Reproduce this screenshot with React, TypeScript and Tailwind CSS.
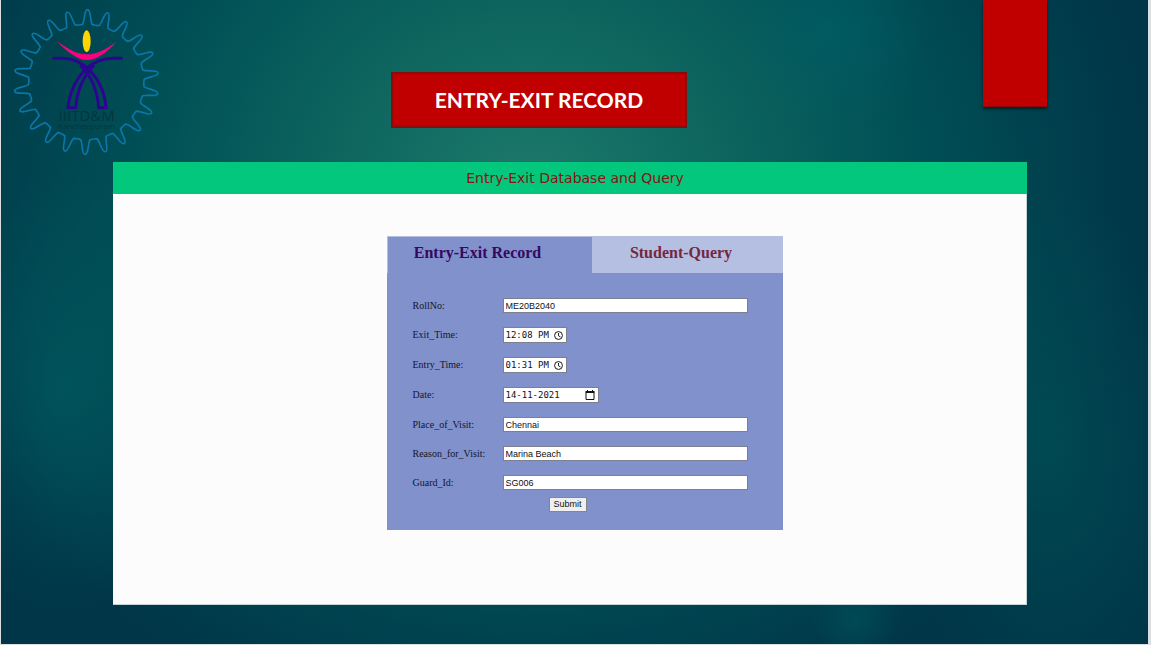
import React from "react";

const TEETH = Array.from({ length: 22 }, (_, i) => (i * 360) / 22);

function Logo() {
  return (
    <svg viewBox="38 24 444 444" className="mt-2 ml-3 size-[148px] shrink-0" role="img" aria-label="IIITD&M Kancheepuram">
      <g transform="translate(258 246)" fill="none" stroke="#0a77a8" strokeWidth="5" strokeLinejoin="round">
        {TEETH.map((angle) => (
          <path
            key={angle}
            transform={`rotate(${angle + 1})`}
            d="M-24.5-170.500L-14-173C-7-187-11-217 0-217S7-187 14-173L24.500-170.500"
          />
        ))}
      </g>
      <ellipse cx="259" cy="124" rx="12" ry="33" fill="#ffd400" />
      <path d="M169 123C202 146 228 163 259 163S316 148 349 125C319 158 288 180 260 180S204 158 169 123Z" fill="#fb0080" />
      <g fill="none" stroke="#2b0590" strokeWidth="9">
        <path d="M156 175H186C222 176 240 187 260 204C294 233 314 279 317 323H295C292 274 278 234 240 195" />
        <path d="M367 175H337C300 176 280 187 260 204C228 233 207 279 203 323H226C230 274 244 234 281 195" />
      </g>
      <text x="259" y="363" textAnchor="middle" fontSize="45" fontFamily="'Open Sans', sans-serif" fill="#04353d">IIITD&amp;M</text>
      <text x="259" y="386" textAnchor="middle" fontSize="24" fontFamily="'Open Sans', sans-serif" fill="#04353d">Kancheepuram</text>
    </svg>
  );
}

function ClockIcon() {
  return (
    <svg viewBox="0 0 16 16" className="size-[9px]" fill="none" stroke="#111" strokeWidth="1.700">
      <circle cx="8" cy="8" r="7" />
      <path d="M8 3.500V8.500L11.500 10.500" />
    </svg>
  );
}

function CalendarIcon() {
  return (
    <svg viewBox="0 0 10 10" className="size-[10px]" fill="none" stroke="#111">
      <path d="M1 2.500H9V9.500H1Z" />
      <path d="M.5 2H9.500" strokeWidth="2" />
      <path d="M2.500 0V2M7.500 0V2" />
    </svg>
  );
}

type Kind = "text" | "time" | "date";

const fields: { id: string; label: string; value: string; kind: Kind }[] = [
  { id: "roll", label: "RollNo:", value: "ME20B2040", kind: "text" },
  { id: "exit", label: "Exit_Time:", value: "12:08 PM", kind: "time" },
  { id: "entry", label: "Entry_Time:", value: "01:31 PM", kind: "time" },
  { id: "date", label: "Date:", value: "14-11-2021", kind: "date" },
  { id: "place", label: "Place_of_Visit:", value: "Chennai", kind: "text" },
  { id: "reason", label: "Reason_for_Visit:", value: "Marina Beach", kind: "text" },
  { id: "guard", label: "Guard_Id:", value: "SG006", kind: "text" },
];

const boxWidth: Record<Kind, string> = {
  text: "h-[15px] w-[245px]",
  time: "h-4 w-16",
  date: "h-4 w-24",
};

function Field({ id, label, value, kind }: (typeof fields)[number]) {
  const picker = kind !== "text";
  return (
    <div className="flex items-center">
      <label htmlFor={id} className="w-[90px] font-['Liberation_Serif',serif] text-[10px] leading-[14px] text-[#15152b]">
        {label}
      </label>
      <div className={`flex items-center border border-[#7c7f90] bg-white px-0.5 ${boxWidth[kind]}`}>
        <input
          id={id}
          type="text"
          defaultValue={value}
          className={`w-full min-w-0 bg-transparent text-[9px] leading-3 text-[#111] outline-none ${
            picker ? "font-['DejaVu_Sans_Mono',monospace]" : "font-['Liberation_Sans',sans-serif]"
          }`}
        />
        {picker && (
          <button type="button" aria-label={`Choose ${kind}`} className="mr-px shrink-0">
            {kind === "time" ? <ClockIcon /> : <CalendarIcon />}
          </button>
        )}
      </div>
    </div>
  );
}

export default function App() {
  return (
    <div className="flex min-h-screen flex-col bg-[#dcdfe1] pr-[3px] pb-px pl-px">
      <div className="flex grow flex-col bg-[#003648] bg-[radial-gradient(circle_at_830px_30px,#00606899,#00606844_50px,transparent_100px),radial-gradient(circle_at_855px_620px,#00606866,transparent_45px),radial-gradient(ellipse_130px_220px_at_60px_390px,#00636588,transparent),radial-gradient(ellipse_150px_260px_at_1050px_450px,#00585a88,transparent),radial-gradient(ellipse_620px_560px_at_46%_190px,#1e7a6b,#0e665f_30%,#005056_62%,#003648)]">
        <header className="flex h-[162px] items-start">
          <Logo />
          <h1 className="mt-[72px] ml-[230px] flex h-14 w-[296px] items-center justify-center border-2 border-[#8b0a0a] bg-[#c00000] font-['Lato',sans-serif] text-[21px] font-bold whitespace-nowrap text-white">
            ENTRY-EXIT RECORD
          </h1>
          <div className="mr-[101px] ml-auto h-[107px] w-16 border-b border-[#8b0a0a] bg-[#c00000] shadow-[0_2px_3px_#0008]" />
        </header>

        <main className="mr-[121px] mb-[39px] ml-28 flex grow flex-col border-r border-b border-[#c5d5d6] bg-[#fcfcfc]">
          <h2 className="-mr-px flex h-8 items-center justify-center bg-[#02c77c] pl-[10px] font-['DejaVu_Sans',sans-serif] text-sm text-[#8b1010]">
            Entry-Exit Database and Query
          </h2>
          <div className="flex justify-center pt-[42px] pl-[30px]">
            <section className="w-[396px] bg-[#8091cc]">
              <div role="tablist" className="flex h-[37px] bg-[#b5bfe1] pt-px pl-px font-['Liberation_Serif',serif] text-base font-bold">
                <button type="button" role="tab" aria-selected="true" className="w-[204px] bg-[#8091cc] pr-6 pb-1 text-[#37085f]">
                  Entry-Exit Record
                </button>
                <button type="button" role="tab" aria-selected="false" className="grow pr-3 pb-1 text-[#74273f]">
                  Student-Query
                </button>
              </div>
              <form className="pt-[25px] pb-[18px] pl-[26px]" onSubmit={(e) => e.preventDefault()}>
                <div className="flex flex-col gap-[14px]">
                  {fields.map((f) => (
                    <Field key={f.id} {...f} />
                  ))}
                </div>
                <button
                  type="submit"
                  className="mt-[7px] ml-[136px] flex h-[15px] w-[38px] items-center justify-center border border-[#85868b] bg-[#efefef] font-['Liberation_Sans',sans-serif] text-[9px] text-[#111]"
                >
                  Submit
                </button>
              </form>
            </section>
          </div>
        </main>
      </div>
    </div>
  );
}
